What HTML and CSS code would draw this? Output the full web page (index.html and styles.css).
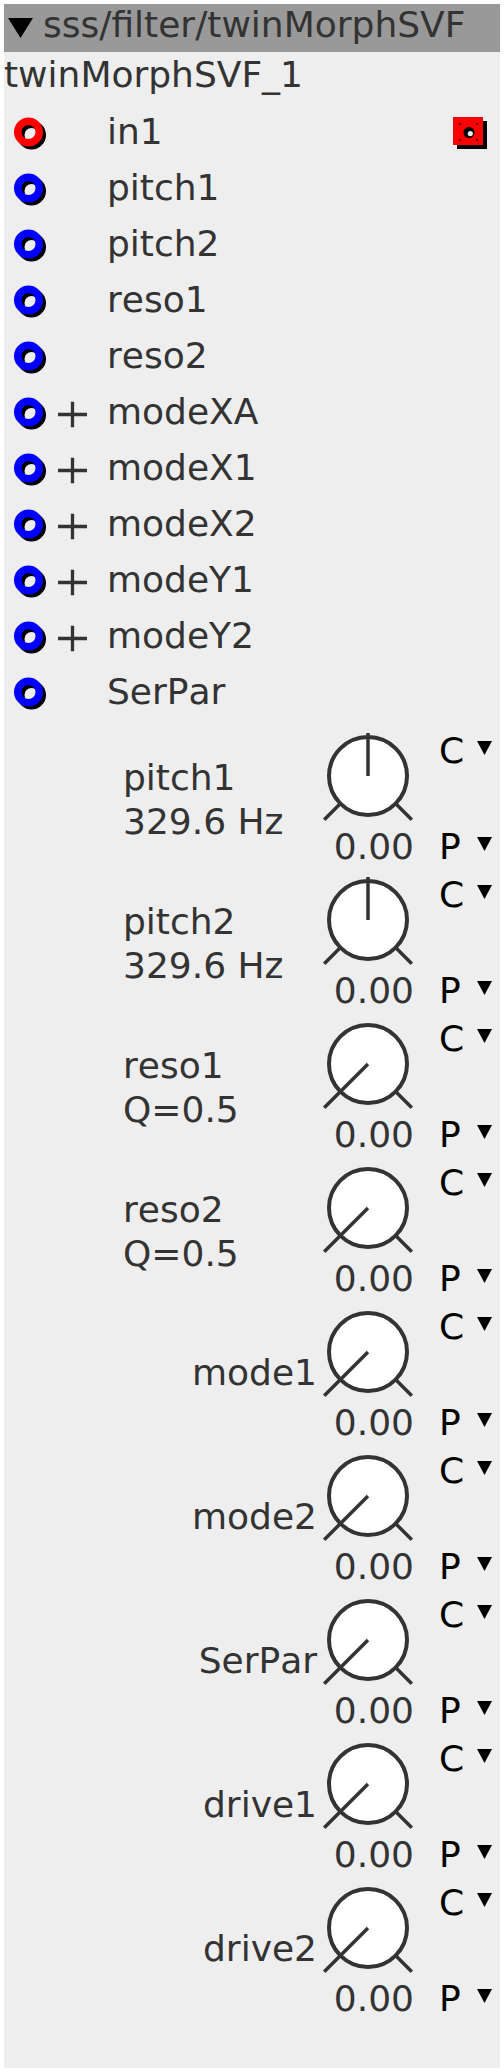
FILE: index.html
```html
<!DOCTYPE html>
<html>
<head>
<meta charset="utf-8">
<link rel="stylesheet" href="styles.css">
</head>
<body>
<div class="panel">
  <div class="hdr"><svg class="tri" viewBox="0 0 25 20"><polygon points="0,0 25,0 12.5,20" fill="#000"/></svg><span>sss/filter/twinMorphSVF</span></div>
  <div class="name">twinMorphSVF_1</div>

  <div class="ports">
    <div class="port">
      <svg class="jack" viewBox="0 0 36 36"><circle cx="21.5" cy="21" r="10.75" fill="none" stroke="#000" stroke-width="7.5"/><circle cx="18.5" cy="18" r="10.75" fill="none" stroke="#f00" stroke-width="7.5"/></svg>
      <span class="plus none"></span>
      <span class="plabel">in1</span>
      <svg class="out" viewBox="0 0 36 36"><rect x="4" y="7" width="30" height="28" fill="#000"/><rect x="0" y="3" width="30" height="28" fill="#f00"/><rect x="6" y="9" width="2" height="2" fill="#600"/><rect x="23" y="9" width="2" height="2" fill="#600"/><rect x="6" y="25" width="2" height="2" fill="#600"/><rect x="23" y="25" width="2" height="2" fill="#600"/><circle cx="16" cy="18.5" r="5.5" fill="#000"/><circle cx="17.3" cy="19.6" r="2.6" fill="#eee"/></svg>
    </div>
    <div class="port">
      <svg class="jack" viewBox="0 0 36 36"><circle cx="21.5" cy="21" r="10.75" fill="none" stroke="#000" stroke-width="7.5"/><circle cx="18.5" cy="18" r="10.75" fill="none" stroke="#00f" stroke-width="7.5"/></svg>
      <span class="plus none"></span>
      <span class="plabel">pitch1</span>
    </div>
    <div class="port">
      <svg class="jack" viewBox="0 0 36 36"><circle cx="21.5" cy="21" r="10.75" fill="none" stroke="#000" stroke-width="7.5"/><circle cx="18.5" cy="18" r="10.75" fill="none" stroke="#00f" stroke-width="7.5"/></svg>
      <span class="plus none"></span>
      <span class="plabel">pitch2</span>
    </div>
    <div class="port">
      <svg class="jack" viewBox="0 0 36 36"><circle cx="21.5" cy="21" r="10.75" fill="none" stroke="#000" stroke-width="7.5"/><circle cx="18.5" cy="18" r="10.75" fill="none" stroke="#00f" stroke-width="7.5"/></svg>
      <span class="plus none"></span>
      <span class="plabel">reso1</span>
    </div>
    <div class="port">
      <svg class="jack" viewBox="0 0 36 36"><circle cx="21.5" cy="21" r="10.75" fill="none" stroke="#000" stroke-width="7.5"/><circle cx="18.5" cy="18" r="10.75" fill="none" stroke="#00f" stroke-width="7.5"/></svg>
      <span class="plus none"></span>
      <span class="plabel">reso2</span>
    </div>
    <div class="port">
      <svg class="jack" viewBox="0 0 36 36"><circle cx="21.5" cy="21" r="10.75" fill="none" stroke="#000" stroke-width="7.5"/><circle cx="18.5" cy="18" r="10.75" fill="none" stroke="#00f" stroke-width="7.5"/></svg>
      <svg class="plus" viewBox="0 0 29 29"><path d="M14.5 1.7V27.3M0 14.5H29" stroke="#333" stroke-width="3.3" fill="none"/></svg>
      <span class="plabel">modeXA</span>
    </div>
    <div class="port">
      <svg class="jack" viewBox="0 0 36 36"><circle cx="21.5" cy="21" r="10.75" fill="none" stroke="#000" stroke-width="7.5"/><circle cx="18.5" cy="18" r="10.75" fill="none" stroke="#00f" stroke-width="7.5"/></svg>
      <svg class="plus" viewBox="0 0 29 29"><path d="M14.5 1.7V27.3M0 14.5H29" stroke="#333" stroke-width="3.3" fill="none"/></svg>
      <span class="plabel">modeX1</span>
    </div>
    <div class="port">
      <svg class="jack" viewBox="0 0 36 36"><circle cx="21.5" cy="21" r="10.75" fill="none" stroke="#000" stroke-width="7.5"/><circle cx="18.5" cy="18" r="10.75" fill="none" stroke="#00f" stroke-width="7.5"/></svg>
      <svg class="plus" viewBox="0 0 29 29"><path d="M14.5 1.7V27.3M0 14.5H29" stroke="#333" stroke-width="3.3" fill="none"/></svg>
      <span class="plabel">modeX2</span>
    </div>
    <div class="port">
      <svg class="jack" viewBox="0 0 36 36"><circle cx="21.5" cy="21" r="10.75" fill="none" stroke="#000" stroke-width="7.5"/><circle cx="18.5" cy="18" r="10.75" fill="none" stroke="#00f" stroke-width="7.5"/></svg>
      <svg class="plus" viewBox="0 0 29 29"><path d="M14.5 1.7V27.3M0 14.5H29" stroke="#333" stroke-width="3.3" fill="none"/></svg>
      <span class="plabel">modeY1</span>
    </div>
    <div class="port">
      <svg class="jack" viewBox="0 0 36 36"><circle cx="21.5" cy="21" r="10.75" fill="none" stroke="#000" stroke-width="7.5"/><circle cx="18.5" cy="18" r="10.75" fill="none" stroke="#00f" stroke-width="7.5"/></svg>
      <svg class="plus" viewBox="0 0 29 29"><path d="M14.5 1.7V27.3M0 14.5H29" stroke="#333" stroke-width="3.3" fill="none"/></svg>
      <span class="plabel">modeY2</span>
    </div>
    <div class="port">
      <svg class="jack" viewBox="0 0 36 36"><circle cx="21.5" cy="21" r="10.75" fill="none" stroke="#000" stroke-width="7.5"/><circle cx="18.5" cy="18" r="10.75" fill="none" stroke="#00f" stroke-width="7.5"/></svg>
      <span class="plus none"></span>
      <span class="plabel">SerPar</span>
    </div>
  </div>

  <div class="knobs">
    <div class="krow">
      <div class="klabel two"><div>pitch1</div><div>329.6 Hz</div></div>
      <div class="kcol"><svg class="knob" viewBox="0 0 100 96"><circle cx="50" cy="48" r="39" fill="#fff" stroke="#333" stroke-width="4"/><path d="M22.4 75.6L6.2 91.8M77.6 75.6L93.8 91.8M50 48V5" stroke="#333" stroke-width="3.5" fill="none"/></svg><div class="val">0.00</div></div>
      <div class="sels"><div class="sel"><span class="sl">C</span><svg class="dd" viewBox="0 0 15 14"><polygon points="0,0 15,0 7.5,14" fill="#000"/></svg></div><div class="sel p"><span class="sl">P</span><svg class="dd" viewBox="0 0 15 14"><polygon points="0,0 15,0 7.5,14" fill="#000"/></svg></div></div>
    </div>
    <div class="krow">
      <div class="klabel two"><div>pitch2</div><div>329.6 Hz</div></div>
      <div class="kcol"><svg class="knob" viewBox="0 0 100 96"><circle cx="50" cy="48" r="39" fill="#fff" stroke="#333" stroke-width="4"/><path d="M22.4 75.6L6.2 91.8M77.6 75.6L93.8 91.8M50 48V5" stroke="#333" stroke-width="3.5" fill="none"/></svg><div class="val">0.00</div></div>
      <div class="sels"><div class="sel"><span class="sl">C</span><svg class="dd" viewBox="0 0 15 14"><polygon points="0,0 15,0 7.5,14" fill="#000"/></svg></div><div class="sel p"><span class="sl">P</span><svg class="dd" viewBox="0 0 15 14"><polygon points="0,0 15,0 7.5,14" fill="#000"/></svg></div></div>
    </div>
    <div class="krow">
      <div class="klabel two"><div>reso1</div><div>Q=0.5</div></div>
      <div class="kcol"><svg class="knob" viewBox="0 0 100 96"><circle cx="50" cy="48" r="39" fill="#fff" stroke="#333" stroke-width="4"/><path d="M22.4 75.6L6.2 91.8M77.6 75.6L93.8 91.8M50 48L6.2 91.8" stroke="#333" stroke-width="3.5" fill="none"/></svg><div class="val">0.00</div></div>
      <div class="sels"><div class="sel"><span class="sl">C</span><svg class="dd" viewBox="0 0 15 14"><polygon points="0,0 15,0 7.5,14" fill="#000"/></svg></div><div class="sel p"><span class="sl">P</span><svg class="dd" viewBox="0 0 15 14"><polygon points="0,0 15,0 7.5,14" fill="#000"/></svg></div></div>
    </div>
    <div class="krow">
      <div class="klabel two"><div>reso2</div><div>Q=0.5</div></div>
      <div class="kcol"><svg class="knob" viewBox="0 0 100 96"><circle cx="50" cy="48" r="39" fill="#fff" stroke="#333" stroke-width="4"/><path d="M22.4 75.6L6.2 91.8M77.6 75.6L93.8 91.8M50 48L6.2 91.8" stroke="#333" stroke-width="3.5" fill="none"/></svg><div class="val">0.00</div></div>
      <div class="sels"><div class="sel"><span class="sl">C</span><svg class="dd" viewBox="0 0 15 14"><polygon points="0,0 15,0 7.5,14" fill="#000"/></svg></div><div class="sel p"><span class="sl">P</span><svg class="dd" viewBox="0 0 15 14"><polygon points="0,0 15,0 7.5,14" fill="#000"/></svg></div></div>
    </div>
    <div class="krow">
      <div class="klabel one">mode1</div>
      <div class="kcol"><svg class="knob" viewBox="0 0 100 96"><circle cx="50" cy="48" r="39" fill="#fff" stroke="#333" stroke-width="4"/><path d="M22.4 75.6L6.2 91.8M77.6 75.6L93.8 91.8M50 48L6.2 91.8" stroke="#333" stroke-width="3.5" fill="none"/></svg><div class="val">0.00</div></div>
      <div class="sels"><div class="sel"><span class="sl">C</span><svg class="dd" viewBox="0 0 15 14"><polygon points="0,0 15,0 7.5,14" fill="#000"/></svg></div><div class="sel p"><span class="sl">P</span><svg class="dd" viewBox="0 0 15 14"><polygon points="0,0 15,0 7.5,14" fill="#000"/></svg></div></div>
    </div>
    <div class="krow">
      <div class="klabel one">mode2</div>
      <div class="kcol"><svg class="knob" viewBox="0 0 100 96"><circle cx="50" cy="48" r="39" fill="#fff" stroke="#333" stroke-width="4"/><path d="M22.4 75.6L6.2 91.8M77.6 75.6L93.8 91.8M50 48L6.2 91.8" stroke="#333" stroke-width="3.5" fill="none"/></svg><div class="val">0.00</div></div>
      <div class="sels"><div class="sel"><span class="sl">C</span><svg class="dd" viewBox="0 0 15 14"><polygon points="0,0 15,0 7.5,14" fill="#000"/></svg></div><div class="sel p"><span class="sl">P</span><svg class="dd" viewBox="0 0 15 14"><polygon points="0,0 15,0 7.5,14" fill="#000"/></svg></div></div>
    </div>
    <div class="krow">
      <div class="klabel one">SerPar</div>
      <div class="kcol"><svg class="knob" viewBox="0 0 100 96"><circle cx="50" cy="48" r="39" fill="#fff" stroke="#333" stroke-width="4"/><path d="M22.4 75.6L6.2 91.8M77.6 75.6L93.8 91.8M50 48L6.2 91.8" stroke="#333" stroke-width="3.5" fill="none"/></svg><div class="val">0.00</div></div>
      <div class="sels"><div class="sel"><span class="sl">C</span><svg class="dd" viewBox="0 0 15 14"><polygon points="0,0 15,0 7.5,14" fill="#000"/></svg></div><div class="sel p"><span class="sl">P</span><svg class="dd" viewBox="0 0 15 14"><polygon points="0,0 15,0 7.5,14" fill="#000"/></svg></div></div>
    </div>
    <div class="krow">
      <div class="klabel one">drive1</div>
      <div class="kcol"><svg class="knob" viewBox="0 0 100 96"><circle cx="50" cy="48" r="39" fill="#fff" stroke="#333" stroke-width="4"/><path d="M22.4 75.6L6.2 91.8M77.6 75.6L93.8 91.8M50 48L6.2 91.8" stroke="#333" stroke-width="3.5" fill="none"/></svg><div class="val">0.00</div></div>
      <div class="sels"><div class="sel"><span class="sl">C</span><svg class="dd" viewBox="0 0 15 14"><polygon points="0,0 15,0 7.5,14" fill="#000"/></svg></div><div class="sel p"><span class="sl">P</span><svg class="dd" viewBox="0 0 15 14"><polygon points="0,0 15,0 7.5,14" fill="#000"/></svg></div></div>
    </div>
    <div class="krow">
      <div class="klabel one">drive2</div>
      <div class="kcol"><svg class="knob" viewBox="0 0 100 96"><circle cx="50" cy="48" r="39" fill="#fff" stroke="#333" stroke-width="4"/><path d="M22.4 75.6L6.2 91.8M77.6 75.6L93.8 91.8M50 48L6.2 91.8" stroke="#333" stroke-width="3.5" fill="none"/></svg><div class="val">0.00</div></div>
      <div class="sels"><div class="sel"><span class="sl">C</span><svg class="dd" viewBox="0 0 15 14"><polygon points="0,0 15,0 7.5,14" fill="#000"/></svg></div><div class="sel p"><span class="sl">P</span><svg class="dd" viewBox="0 0 15 14"><polygon points="0,0 15,0 7.5,14" fill="#000"/></svg></div></div>
    </div>
  </div>
</div>
</body>
</html>
```

FILE: styles.css
```css
html, body {
  margin: 0;
  padding: 0;
  background: #fff;
}
body {
  padding: 4px;
  font-family: "DejaVu Sans", "Noto Sans", sans-serif;
  font-size: 36px;
  font-kerning: none;
  color: #333;
}
.panel {
  width: 496px;
  background: #eee;
  padding-bottom: 52px;
}
.hdr {
  display: flex;
  align-items: flex-start;
  height: 48px;
  padding-left: 4px;
  box-sizing: border-box;
  background: #999;
  line-height: 42px;
  white-space: nowrap;
  overflow: hidden;
}
.hdr .tri {
  width: 25px;
  height: 20px;
  margin-top: 14px;
  margin-right: 10px;
  flex: none;
}
.name {
  height: 52px;
  box-sizing: border-box;
  padding-top: 2px;
  line-height: 42px;
  white-space: nowrap;
}
.port {
  display: flex;
  align-items: center;
  height: 56px;
  padding-left: 6px;
}
.jack {
  width: 36px;
  height: 36px;
  flex: none;
  display: block;
}
.plus {
  width: 29px;
  height: 29px;
  margin-left: 12px;
  margin-top: 5px;
  flex: none;
  display: block;
}
.plabel {
  margin-left: 20px;
  line-height: 42px;
  white-space: nowrap;
}
.out {
  width: 36px;
  height: 36px;
  margin-left: auto;
  margin-right: 11px;
  flex: none;
  display: block;
}
.krow {
  display: grid;
  grid-template-columns: 314px 100px 82px;
  height: 144px;
}
.klabel {
  display: flex;
  flex-direction: column;
  justify-content: center;
  line-height: 43.2px;
  white-space: nowrap;
}
.klabel.two {
  padding-top: 11px;
  padding-left: 119px;
  align-items: flex-start;
}
.klabel.one {
  padding-top: 5px;
  padding-right: 1px;
  align-items: flex-end;
}
.kcol {
  display: flex;
  flex-direction: column;
}
.knob {
  display: block;
  width: 100px;
  height: 96px;
  margin-top: 8px;
  flex: none;
}
.val {
  margin-top: 5px;
  line-height: 36px;
  text-align: right;
  padding-right: 4px;
  white-space: nowrap;
}
.sels {
  padding-left: 21px;
  display: flex;
  flex-direction: column;
  color: #000;
}
.sel {
  display: flex;
  align-items: flex-start;
  height: 42px;
  line-height: 42px;
  margin-top: 10px;
}
.sel.p {
  margin-top: 54px;
}
.sl {
  width: 38px;
  flex: none;
}
.dd {
  width: 15px;
  height: 14px;
  margin-top: 11px;
  flex: none;
  display: block;
}
```
